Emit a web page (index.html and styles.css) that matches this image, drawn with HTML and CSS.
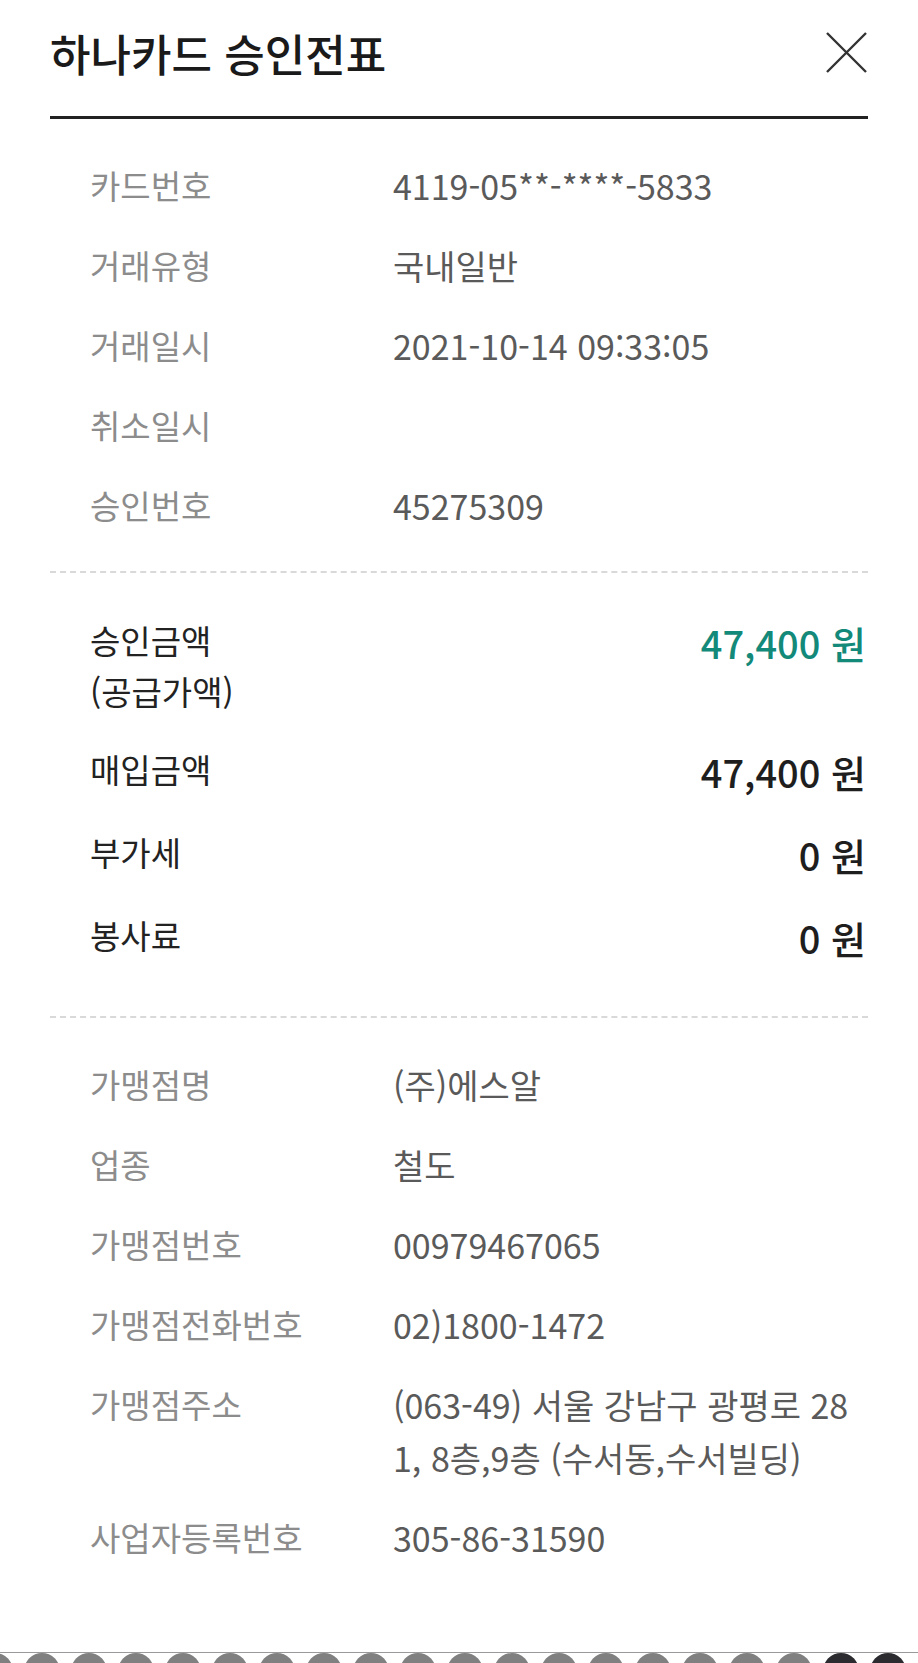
FILE: index.html
```html
<!DOCTYPE html>
<html lang="ko">
<head>
<meta charset="utf-8">
<title>하나카드 승인전표</title>
<link rel="stylesheet" href="styles.css">
</head>
<body>
<div class="page">
  <header class="header">
    <h1 class="title">하나카드 승인전표</h1>
    <button class="close" aria-label="닫기">
      <svg width="44" height="44" viewBox="0 0 44 44"><path d="M3 2 L42 41 M42 2 L3 41" stroke="#333" stroke-width="2.4" fill="none"/></svg>
    </button>
  </header>

  <section class="section info">
    <div class="row"><div class="label">카드번호</div><div class="value">4119-05**-****-5833</div></div>
    <div class="row"><div class="label">거래유형</div><div class="value">국내일반</div></div>
    <div class="row"><div class="label">거래일시</div><div class="value">2021-10-14 09:33:05</div></div>
    <div class="row"><div class="label">취소일시</div><div class="value"></div></div>
    <div class="row"><div class="label">승인번호</div><div class="value">45275309</div></div>
  </section>

  <section class="section amounts">
    <div class="arow"><div class="alabel">승인금액<br>(공급가액)</div><div class="amount green">47,400 원</div></div>
    <div class="arow"><div class="alabel">매입금액</div><div class="amount">47,400 원</div></div>
    <div class="arow"><div class="alabel">부가세</div><div class="amount">0 원</div></div>
    <div class="arow"><div class="alabel">봉사료</div><div class="amount">0 원</div></div>
  </section>

  <section class="section info last">
    <div class="row"><div class="label">가맹점명</div><div class="value">(주)에스알</div></div>
    <div class="row"><div class="label">업종</div><div class="value">철도</div></div>
    <div class="row"><div class="label">가맹점번호</div><div class="value">00979467065</div></div>
    <div class="row"><div class="label">가맹점전화번호</div><div class="value">02)1800-1472</div></div>
    <div class="row"><div class="label">가맹점주소</div><div class="value addr">(063-49) 서울 강남구 광평로 281, 8층,9층 (수서동,수서빌딩)</div></div>
    <div class="row"><div class="label">사업자등록번호</div><div class="value">305-86-31590</div></div>
  </section>

  <div class="edge">
    <span class="dot"></span><span class="dot"></span><span class="dot"></span><span class="dot"></span><span class="dot"></span>
    <span class="dot"></span><span class="dot"></span><span class="dot"></span><span class="dot"></span><span class="dot"></span>
    <span class="dot"></span><span class="dot"></span><span class="dot"></span><span class="dot"></span><span class="dot"></span>
    <span class="dot"></span><span class="dot"></span><span class="dot"></span><span class="dot dark"></span><span class="dot dark"></span>
  </div>
</div>
</body>
</html>
```

FILE: styles.css
```css
html, body {
  margin: 0;
  padding: 0;
  height: 100%;
  background: #fff;
}
body {
  font-family: "Noto Sans CJK KR", "Noto Sans", sans-serif;
}
.page {
  min-height: 100%;
  display: flex;
  flex-direction: column;
  overflow: hidden;
}
.header {
  margin: 0 50px;
  padding: 20px 0 30px;
  display: flex;
  align-items: center;
  justify-content: space-between;
  border-bottom: 3px solid #222;
}
.title {
  margin: 0;
  font-size: 44px;
  line-height: 66px;
  font-weight: 500;
  color: #1a1a1a;
}
.close {
  border: 0;
  background: none;
  padding: 0;
  margin-right: 0;
  width: 44px;
  height: 44px;
  display: flex;
}
.section {
  margin: 0 50px;
  padding: 40px 0 39px 40px;
  border-bottom: 2px dashed #d9d9d9;
  display: flex;
  flex-direction: column;
  gap: 27px;
}
.section.last {
  border-bottom: 0;
}
.row {
  display: grid;
  grid-template-columns: 303px 1fr;
  line-height: 53px;
  min-height: 53px;
}
.label {
  font-size: 33px;
  color: #8c8c8c;
}
.value {
  font-size: 34px;
  color: #5a5a5a;
}
.addr {
  word-break: break-all;
}
.amounts {
  padding: 42px 2px 50px 40px;
  gap: 27px;
}
.arow {
  display: flex;
  justify-content: space-between;
  align-items: flex-start;
}
.alabel {
  font-size: 33px;
  line-height: 51px;
  color: #222;
}
.amount {
  font-size: 38px;
  line-height: 56px;
  font-weight: 500;
  color: #1e1e1e;
}
.amount.green {
  color: #13897a;
}
.edge {
  margin-top: auto;
  height: 10px;
  border-top: 1px solid #9a9a9a;
  overflow: hidden;
  display: flex;
  gap: 11px;
  margin-left: -23px;
}
.dot {
  flex: 0 0 36px;
  width: 36px;
  height: 36px;
  border-radius: 50%;
  background: #808080;
}
.dot.dark {
  background: #2b2b30;
}
```
